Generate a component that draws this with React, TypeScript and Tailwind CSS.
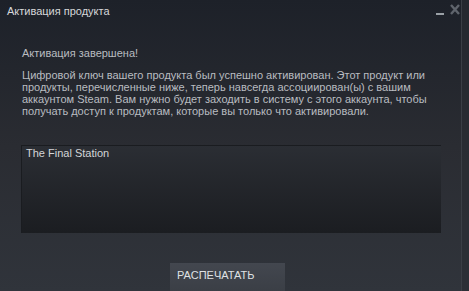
import React from "react";

const lines = [
    "Цифровой ключ вашего продукта был успешно активирован. Этот продукт или",
    "продукты, перечисленные ниже, теперь навсегда ассоциирован(ы) с вашим",
    "аккаунтом Steam. Вам нужно будет заходить в систему с этого аккаунта, чтобы",
    "получать доступ к продуктам, которые вы только что активировали.",
];

const App: React.FC = () => {
    return (
        <div
            className="w-[469px] h-[291px] overflow-hidden flex bg-gradient-to-b from-[#1d2129] via-[#2a2c32] to-[#30343b] text-[11px] leading-[12px]"
            style={{ fontFamily: '"Liberation Sans", Arial, sans-serif' }}
        >
            <div className="flex-1 flex flex-col">
                <div className="pt-[5px] pl-[7px] pr-[1px] h-[17px] flex justify-between">
                    <span className="text-[#d6d8da]">Активация продукта</span>
                    <div className="flex items-start gap-[6px]">
                        <span className="block w-[8px] h-[2px] bg-[#9aa0a6] mt-[8px]" />
                        <svg width="10" height="11" viewBox="0 0 10 11" className="-mt-[1px]">
                            <path d="M1 1L9 10M9 1L1 10" stroke="#5f646c" strokeWidth="2.4" />
                        </svg>
                    </div>
                </div>

                <div className="pl-[22px] pr-[20px] flex flex-col">
                    <p className="mt-[30px] text-[#b9bcc0]">Активация завершена!</p>
                    <p className="mt-[10px] text-[#b9bcc0] whitespace-nowrap">
                        {lines.map((l) => (
                            <span key={l} className="block">
                                {l}
                            </span>
                        ))}
                    </p>

                    <div className="mt-[28px] h-[88px] w-[420px] -ml-[1px] bg-gradient-to-b from-[#2b2e34] to-[#1b1d21] shadow-[inset_1px_1px_0_#1a1c20] pl-[5px] pt-[2px]">
                        <span className="text-[#d3d5d8]">The Final Station</span>
                    </div>

                    <div className="mt-[30px] pl-[148px]">
                        <button className="block w-[115px] h-[30px] bg-gradient-to-b from-[#43474f] to-[#3a3e45] text-[#dfe1e4] text-left pl-[7px] pb-[6px] leading-[12px]">
                            РАСПЕЧАТАТЬ
                        </button>
                    </div>
                </div>
            </div>
            <div className="w-[8px] h-full border-l border-[#3a3e45] bg-[#2a2d33]/60" />
        </div>
    );
};

export default App;
